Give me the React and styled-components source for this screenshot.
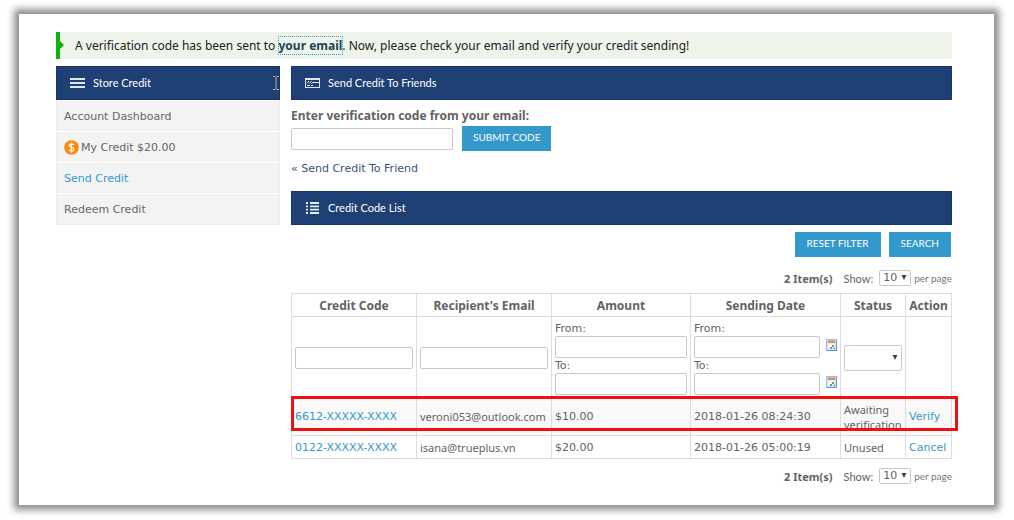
import React from "react";
import styled, { createGlobalStyle, css } from "styled-components";

const body = '"DejaVu Sans", Verdana, sans-serif';
const compact = '"Noto Sans", Verdana, sans-serif';
const display = 'Lato, "Open Sans", sans-serif';

const GlobalStyle = createGlobalStyle`
  * { box-sizing: border-box; }
  body {
    margin: 0;
    background: #fff;
    color: #636363;
    font: 11px/15px ${body};
  }
  a { color: #3399cc; text-decoration: none; }
  input, select, button { font: inherit; color: inherit; margin: 0; }
`;

const Card = styled.div`
  margin: 14px 20px 15px 19px;
  padding: 18px 42px 21px 37px;
  background: #fff;
  box-shadow: 0 0 7px 5px #8f8f8f;
`;

const Message = styled.p`
  position: relative;
  margin: 0 0 7px;
  padding: 6px 0 6px 15px;
  border-left: 4px solid #0db30d;
  background: #eef4ea;
  color: #222;
  font: 12px/15px ${compact};
`;

const Marker = styled.span`
  position: absolute;
  left: 0;
  top: 9px;
  border: 4px solid transparent;
  border-left-color: #0db30d;
  border-right-width: 0;
`;

const EmailLink = styled.a`
  color: #1d4455;
  font-weight: bold;
  outline: 1px dotted #3399cc;
`;

const Columns = styled.div`
  display: grid;
  grid-template-columns: 224px minmax(0, 1fr);
  column-gap: 11px;
  align-items: start;
`;

const Heading = styled.h2`
  position: relative;
  display: flex;
  align-items: center;
  gap: 8px;
  height: 34px;
  margin: 0;
  padding: 0 13px;
  border: 1px solid #17356a;
  background: #1f4074;
  color: #fff;
  font: 11px/16px ${display};

  svg { flex: none; }
`;

const Cursor = styled.span`
  position: absolute;
  right: 0;
  top: 9px;
  display: flex;
`;

const MenuList = styled.ul`
  margin: 0;
  padding: 0;
  list-style: none;
  border: 1px solid #eee;
  border-top: 0;
`;

const MenuItem = styled.li`
  border-top: 1px solid #fff;
  background: #f3f3f3;
`;

const MenuLink = styled.a`
  display: flex;
  align-items: center;
  gap: 2px;
  height: 30px;
  padding: 0 7px;
  color: ${(p) => (p.$active ? "#3399cc" : "#666")};
`;

const field = css`
  height: 22px;
  padding: 0 4px;
  border: 1px solid #c8c8c8;
  border-radius: 2px;
  background: #fff;
`;

const TextInput = styled.input`
  ${field}
  display: block;
  width: 100%;
  min-width: 0;
`;

const VerifyForm = styled.form`
  display: grid;
  grid-template-columns: 162px auto;
  justify-content: start;
  align-items: center;
  column-gap: 9px;
  row-gap: 3px;
  padding-top: 8px;
`;

const FormLabel = styled.label`
  grid-column: 1 / -1;
  font: bold 12px/15px ${compact};
`;

const Button = styled.button`
  height: 25px;
  padding: 0 11px 2px;
  border: 0;
  background: #3399cc;
  color: #fff;
  font: 10px/15px ${display};
`;

const BackLink = styled.a`
  display: inline-block;
  margin: 10px 0 15px;
  color: #3d4f7c;
`;

const Actions = styled.div`
  display: flex;
  justify-content: flex-end;
  gap: 8px;
  padding: 7px 1px 13px 0;

  button { padding: 0 12px 2px; }
`;

const Pager = styled.div`
  display: flex;
  justify-content: flex-end;
  align-items: center;
  height: 16px;
  font: 11px/15px ${display};
`;

const Count = styled.strong`
  margin-right: 11px;
  font: bold 11px/15px ${compact};
`;

const PerPage = styled.span`
  margin-left: 3px;
  color: #777;
  font-size: 10px;
`;

const SelectBox = styled.span`
  position: relative;
  display: ${(p) => (p.$wide ? "block" : "inline-block")};
  width: ${(p) => (p.$wide ? "100%" : "32px")};
  margin-left: ${(p) => (p.$wide ? 0 : "6px")};

  svg {
    position: absolute;
    right: 4px;
    top: 50%;
    margin-top: -3px;
    pointer-events: none;
  }
`;

const Select = styled.select`
  ${field}
  appearance: none;
  display: block;
  width: 100%;
  height: ${(p) => (p.$wide ? "26px" : "16px")};
  padding: 0 3px;
  font: 11px/14px ${body};
`;

const Grid = styled.table`
  width: 100%;
  margin: 7px 0 9px;
  border-collapse: collapse;
  table-layout: fixed;

  th, td {
    padding: 4px 3px 3px;
    border: 1px solid #ddd;
    text-align: left;
    vertical-align: middle;
  }
  th {
    padding: 4px 0 3px;
    text-align: center;
    font: bold 12px/15px ${compact};
  }
`;

const FilterRow = styled.tr`
  td { padding: 4px 3px 1px; }
`;

const Row = styled.tr`
  position: relative;
  height: ${(p) => (p.$shaded ? "39px" : "23px")};
  background: ${(p) => (p.$shaded ? "#f9f9f9" : "#fff")};
`;

const CompactCell = styled.td`
  font-family: ${compact};
`;

const Highlight = styled.span`
  position: absolute;
  inset: -1px -6px 5px -1px;
  border: 3px solid #f01010;
  pointer-events: none;
`;

const RangeLabel = styled.label`
  display: block;
`;

const DateField = styled.span`
  display: flex;
  align-items: center;
  gap: 6px;
`;

const IconButton = styled.button`
  display: block;
  flex: none;
  padding: 0;
  border: 0;
  background: none;
`;

const BarsIcon = () => (
  <svg width="15" height="10" viewBox="0 0 15 10" aria-hidden="true">
    <path d="M0 1h15M0 5h15M0 9h15" stroke="#dfe6f0" strokeWidth="2" />
  </svg>
);

const CardIcon = () => (
  <svg width="15" height="10" viewBox="0 0 15 10" aria-hidden="true" fill="none" stroke="#dfe6f0">
    <rect x="0.5" y="0.5" width="14" height="9" />
    <path d="M1 1.500h13M8 4.500h6" />
    <path d="M2 5.500l2-2.500M4.500 5.500l2-2.500M6.500 5.500L8.500 4M2 7.500h3M6 7.500h2" />
  </svg>
);

const ListIcon = () => (
  <svg width="15" height="12" viewBox="0 0 15 12" aria-hidden="true">
    <path
      d="M1 1h2M5 1h9M1 4.300h2M5 4.300h9M1 7.700h2M5 7.700h9M1 11h2M5 11h9"
      stroke="#e8edf5"
      strokeWidth="1.800"
    />
  </svg>
);

const CursorIcon = () => (
  <svg width="6" height="14" viewBox="0 0 6 14" aria-hidden="true">
    <path d="M0 .5h2.500M3.500 .5H6M3 1v12M0 13.500h2.500M3.500 13.500H6" stroke="#b9ab94" fill="none" />
  </svg>
);

const CoinIcon = () => (
  <svg width="15" height="15" viewBox="0 0 15 15" aria-hidden="true">
    <circle cx="7.5" cy="7.5" r="7.3" fill="#ff8a0a" />
    <path
      d="M10 5.200C9.700 4.200 8.800 3.800 7.500 3.800C6.100 3.800 5.100 4.400 5.100 5.500C5.100 8 10 6.700 10 9.300C10 10.500 9 11.100 7.500 11.100C6.100 11.100 5.100 10.500 4.900 9.500M7.500 2.300V12.700"
      fill="none"
      stroke="#fff"
      strokeWidth="1.200"
    />
  </svg>
);

const CalendarIcon = () => (
  <svg width="11" height="12" viewBox="0 0 11 12" aria-hidden="true">
    <rect x="0.5" y="0.5" width="10" height="11" fill="#cfdff5" stroke="#9dbbe3" />
    <rect x="2" y="1.500" width="7" height="2.500" fill="#f08a4b" />
    <path d="M2 4.500h7v5.500H2z" fill="#f4f8fd" />
    <path d="M6 6h2v2H6zM4 8h2v2H4zM7.500 8.500h1.500V10H7.500z" fill="#5fa870" />
    <path d="M10.500 1v11M1 11.500h10" stroke="#6f95cc" />
  </svg>
);

const Arrow = () => (
  <svg width="6" height="5" viewBox="0 0 6 5" aria-hidden="true">
    <path d="M.5 0h5L3 5z" fill="#444" />
  </svg>
);

const menu = [
  { label: "Account Dashboard" },
  { label: "My Credit $20.00", icon: true },
  { label: "Send Credit", active: true },
  { label: "Redeem Credit" },
];

const rows = [
  {
    code: "6612-XXXXX-XXXX",
    email: "veroni053@outlook.com",
    amount: "$10.00",
    date: "2018-01-26 08:24:30",
    status: "Awaiting verification",
    action: "Verify",
    highlighted: true,
  },
  {
    code: "0122-XXXXX-XXXX",
    email: "isana@trueplus.vn",
    amount: "$20.00",
    date: "2018-01-26 05:00:19",
    status: "Unused",
    action: "Cancel",
  },
];

function PagerBar({ id }) {
  return (
    <Pager>
      <Count>2 Item(s)</Count>
      <label htmlFor={id}>Show:</label>
      <SelectBox>
        <Select id={id} defaultValue="10">
          <option>10</option>
          <option>20</option>
          <option>50</option>
        </Select>
        <Arrow />
      </SelectBox>
      <PerPage>per page</PerPage>
    </Pager>
  );
}

function DateRange({ id, label }) {
  return (
    <>
      <RangeLabel htmlFor={id}>{label}</RangeLabel>
      <DateField>
        <TextInput id={id} />
        <IconButton type="button" aria-label="Pick a date">
          <CalendarIcon />
        </IconButton>
      </DateField>
    </>
  );
}

export default function App() {
  return (
    <>
      <GlobalStyle />
      <Card>
        <Message>
          <Marker />
          A verification code has been sent to <EmailLink href="#email">your email</EmailLink>. Now,
          please check your email and verify your credit sending!
        </Message>
        <Columns>
          <nav>
            <Heading>
              <BarsIcon />
              Store Credit
              <Cursor>
                <CursorIcon />
              </Cursor>
            </Heading>
            <MenuList>
              {menu.map((item) => (
                <MenuItem key={item.label}>
                  <MenuLink href="#menu" $active={item.active}>
                    {item.icon && <CoinIcon />}
                    {item.label}
                  </MenuLink>
                </MenuItem>
              ))}
            </MenuList>
          </nav>
          <main>
            <Heading>
              <CardIcon />
              Send Credit To Friends
            </Heading>
            <VerifyForm onSubmit={(e) => e.preventDefault()}>
              <FormLabel htmlFor="code">Enter verification code from your email:</FormLabel>
              <TextInput id="code" />
              <Button>SUBMIT CODE</Button>
            </VerifyForm>
            <BackLink href="#send">« Send Credit To Friend</BackLink>
            <Heading>
              <ListIcon />
              Credit Code List
            </Heading>
            <Actions>
              <Button type="button">RESET FILTER</Button>
              <Button type="button">SEARCH</Button>
            </Actions>
            <PagerBar id="show-top" />
            <Grid>
              <colgroup>
                <col width="125" />
                <col width="135" />
                <col />
                <col width="150" />
                <col width="65" />
                <col width="46" />
              </colgroup>
              <thead>
                <tr>
                  <th>Credit Code</th>
                  <th>Recipient's Email</th>
                  <th>Amount</th>
                  <th>Sending Date</th>
                  <th>Status</th>
                  <th>Action</th>
                </tr>
              </thead>
              <tbody>
                <FilterRow>
                  <td>
                    <TextInput aria-label="Credit code" />
                  </td>
                  <td>
                    <TextInput aria-label="Recipient's email" />
                  </td>
                  <td>
                    <RangeLabel htmlFor="amount-from">From:</RangeLabel>
                    <TextInput id="amount-from" />
                    <RangeLabel htmlFor="amount-to">To:</RangeLabel>
                    <TextInput id="amount-to" />
                  </td>
                  <td>
                    <DateRange id="date-from" label="From:" />
                    <DateRange id="date-to" label="To:" />
                  </td>
                  <td>
                    <SelectBox $wide>
                      <Select $wide aria-label="Status" defaultValue="">
                        <option value=""></option>
                        <option>Unused</option>
                      </Select>
                      <Arrow />
                    </SelectBox>
                  </td>
                  <td></td>
                </FilterRow>
                {rows.map((row) => (
                  <Row key={row.code} $shaded={row.highlighted}>
                    <td>
                      <a href="#code">{row.code}</a>
                      {row.highlighted && <Highlight />}
                    </td>
                    <CompactCell>{row.email}</CompactCell>
                    <td>{row.amount}</td>
                    <td>{row.date}</td>
                    <CompactCell>{row.status}</CompactCell>
                    <td>
                      <a href="#action">{row.action}</a>
                    </td>
                  </Row>
                ))}
              </tbody>
            </Grid>
            <PagerBar id="show-bottom" />
          </main>
        </Columns>
      </Card>
    </>
  );
}
